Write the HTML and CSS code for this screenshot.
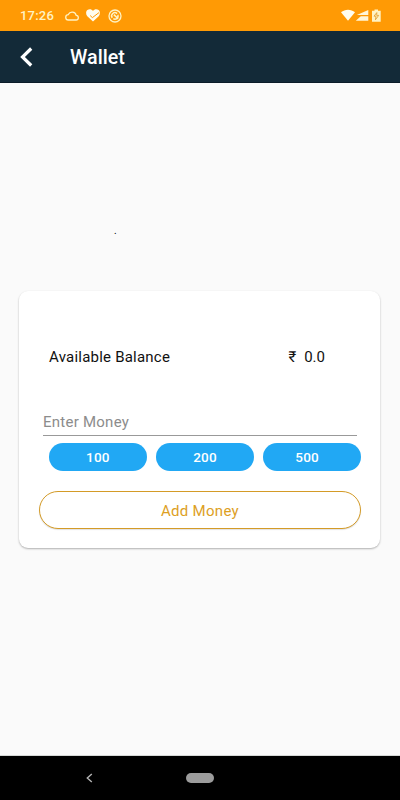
FILE: index.html
```html
<!DOCTYPE html>
<html lang="en">
<head>
    <meta charset="UTF-8">
    <meta name="viewport" content="width=device-width, initial-scale=1.0">
    <title>Wallet</title>
    <link rel="stylesheet" href="styles.css">
</head>
<body>

    <!-- Status Bar -->
    <div class="status-bar">
        <span class="time">17:26</span>
        <svg class="cloud" width="14" height="10" viewBox="0 0 14 10">
            <path d="M3.6 9h7.2a2.3 2.3 0 0 0 .4-4.6A4.2 4.2 0 0 0 3.3 3.6 2.7 2.7 0 0 0 3.6 9z" fill="none" stroke="#fff3c4" stroke-width="1.3"/>
        </svg>
        <svg class="heart" width="14" height="13" viewBox="0 0 14 13">
            <path d="M7 12.6L1.3 7.2C-.4 5.3-.2 2.4 1.4 1.1 3.2-.3 5.7.1 7 2c1.3-1.9 3.8-2.3 5.6-.9 1.6 1.3 1.8 4.2.1 6.1z" fill="#fffdf0"/>
            <path d="M4.2 6.6l2.2 2 6.6-5" fill="none" stroke="#ff9a05" stroke-width="1"/>
        </svg>
        <svg class="sync" width="14" height="14" viewBox="0 0 14 14" fill="none" stroke="#fff3c4">
            <circle cx="7" cy="7" r="6" stroke-width="1.3"/>
            <path d="M4.3 8.8a3.2 3.2 0 0 1 4.8-4.2M9.9 5.8a3.2 3.2 0 0 1-4.600 3.900M5.800 5.600l4.400 4" stroke-width="1.5"/>
        </svg>
        <svg class="signals" width="40" height="13" viewBox="0 0 40 13">
            <path d="M0 3.3C4-.1 10-.1 14 3.3L7 11.8z" fill="#fffdf0"/>
            <path d="M27.3 1v5H15.8zM27.3 7.2v4.5H14.8l5-4.5z" fill="#fff6d8"/>
            <path d="M31 1.7h2.5V.4H37v1.3h2.700v11H31z" fill="#fff3c4"/>
            <path d="M35.8 3.6L33 7.2h2l-.6 3.6 3.3-4.4h-2z" fill="none" stroke="#e09a2a" stroke-width=".8"/>
        </svg>
    </div>

    <header>
        <svg class="back" width="13" height="20" viewBox="0 0 13 20">
            <path d="M11.2 1.5L2.5 10l8.700 8.500" fill="none" stroke="#fff" stroke-width="3.2"/>
        </svg>
        <h1>Wallet</h1>
    </header>

    <main>
        <p class="message">.</p>

        <!-- Wallet Card -->
        <div class="card">
            <div class="balance">
                <span class="label">Available Balance</span>
                <span class="amount"><span class="currency">₹</span>0.0</span>
            </div>
            <input class="money" type="text" placeholder="Enter Money">
            <div class="presets">
                <button>100</button>
                <button>200</button>
                <button class="last">500</button>
            </div>
            <button class="add-money">Add Money</button>
        </div>
    </main>

    <!-- Navigation Bar -->
    <nav>
        <svg class="nav-back" width="7" height="10" viewBox="0 0 7 10">
            <path d="M5.8 1L1.3 5l4.5 4" fill="none" stroke="#b4b4b4" stroke-width="1.4"/>
        </svg>
        <span class="home"></span>
    </nav>

</body>
</html>
```

FILE: styles.css
```css
/* General Styling */
* {
    box-sizing: border-box;
}

body {
    font-family: Roboto, "Noto Sans", sans-serif;
    background-color: #fafafa;
    margin: 0;
    height: 800px;
    display: flex;
    flex-direction: column;
    overflow: hidden;
}

button {
    font-family: inherit;
    cursor: pointer;
}

/* Status Bar */
.status-bar {
    height: 31px;
    background-color: #ff9a05;
    display: flex;
    align-items: center;
    padding: 0 19px 0 20px;
}

.time {
    width: 45px;
    font-size: 13px;
    font-weight: 500;
    letter-spacing: 0.2px;
    color: #fff3c4;
}

.heart {
    margin-left: 7px;
}

.sync {
    margin-left: 8px;
}

.signals {
    margin-left: auto;
}

/* Header */
header {
    height: 52px;
    background-color: #132a38;
    border-bottom: 1px solid #0b1c28;
    display: flex;
    align-items: center;
    padding-left: 20px;
}

header h1 {
    margin: 2px 0 0 37px;
    font-size: 19.7px;
    font-weight: 500;
    color: #fff;
}

main {
    flex: 1;
    border-bottom: 1px solid #d5d8d6;
}

.message {
    height: 208px;
    margin: 0;
    padding: 142px 0 0 114px;
    font-size: 10px;
    line-height: 12px;
    color: #000;
}

/* Wallet Card */
.card {
    width: 361px;
    height: 257px;
    margin: 0 0 0 19px;
    padding: 55px 19px 0 20px;
    background-color: #fff;
    border-radius: 9px;
    box-shadow: 0 1px 2px rgba(0, 0, 0, 0.3);
}

.balance {
    display: flex;
    justify-content: space-between;
    padding: 0 36px 0 10px;
    font-size: 15px;
    line-height: 22px;
    color: #111;
}

.label {
    letter-spacing: 0.22px;
}

.currency {
    margin-right: 8px;
}

.money {
    display: block;
    width: 314px;
    height: 27px;
    margin: 41px 0 0 4px;
    padding: 0;
    border: none;
    border-bottom: 1px solid #999;
    outline: none;
    background: none;
    font-family: inherit;
    font-size: 15px;
    letter-spacing: 0.25px;
}

.money::placeholder {
    color: #8c8c8c;
}

.presets {
    display: grid;
    grid-template-columns: repeat(3, 1fr);
    gap: 9.5px;
    margin: 7px 0 0 10px;
}

.presets button {
    height: 28px;
    padding: 0;
    border: none;
    border-radius: 14px;
    background-color: #21a8f4;
    color: #fff;
    font-size: 13.5px;
    font-weight: 500;
    letter-spacing: 0.2px;
}

.presets .last {
    padding-right: 10px;
}

.add-money {
    display: block;
    width: 322px;
    height: 38px;
    margin-top: 20px;
    padding-top: 2px;
    border: 1.5px solid #d49b27;
    border-radius: 19px;
    background-color: #fff;
    box-shadow: 0 1px 1px rgba(0, 0, 0, 0.12);
    color: #dda01f;
    font-size: 15px;
    letter-spacing: 0.3px;
}

/* Navigation Bar */
nav {
    height: 44px;
    background-color: #000;
    display: flex;
    align-items: center;
    padding-left: 86px;
}

.home {
    width: 28px;
    height: 10px;
    margin-left: 93px;
    border-radius: 5px;
    background-color: #9c9c9c;
}
```
